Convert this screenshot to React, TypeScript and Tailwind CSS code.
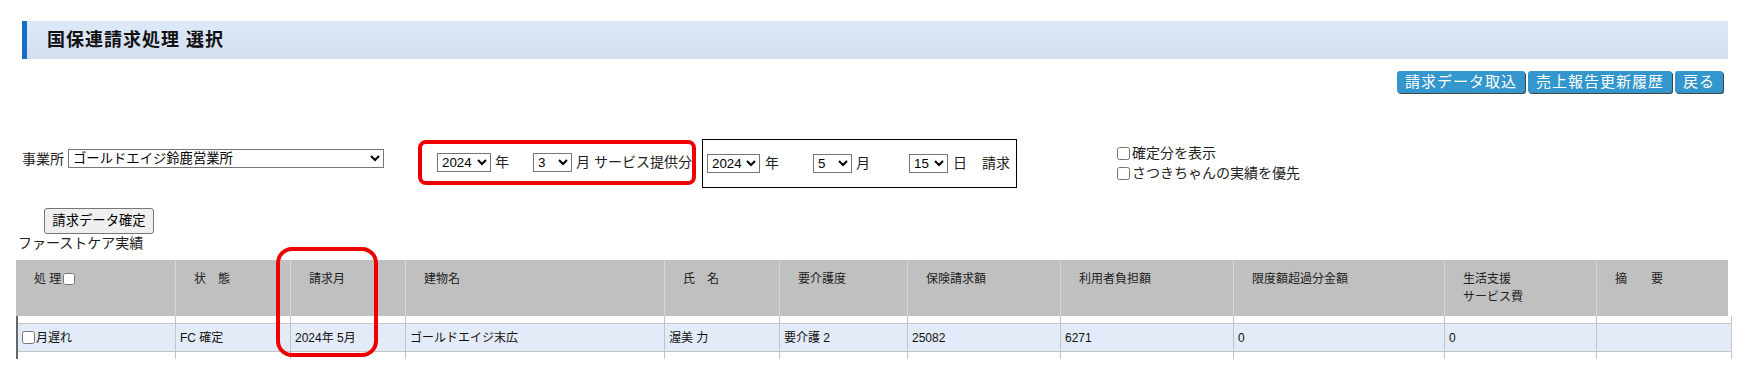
import React from "react";

const font = "font-['Liberation_Sans','Noto_Sans_CJK_JP',sans-serif]";

const headCols =
  "grid grid-cols-[160px_115px_115px_259px_115px_128px_153px_173px_211px_152px_131px]";
const dataCols =
  "grid grid-cols-[158px_115px_115px_259px_115px_128px_153px_173px_211px_152px_135px]";

const selectCls =
  "h-[19px] border border-[#767676] bg-white text-[13.33px] leading-none text-black";

const Sel = ({ value, w }: { value: string; w: string }) => (
  <select className={`${selectCls} ${w}`} defaultValue={value}>
    <option value={value}>{value}</option>
  </select>
);

const BlueButton = ({ label }: { label: string }) => (
  <button className="h-[22px] rounded-[3px] bg-[#3396cc] px-[8px] text-[15px] leading-[20px] tracking-[1px] text-white shadow-[1px_1px_0_#444]">
    {label}
  </button>
);

const headers: React.ReactNode[] = [
  <span className="flex items-center">
    処 理
    <input type="checkbox" className="ml-[2px] h-[12px] w-[12px]" />
  </span>,
  "状　態",
  "請求月",
  "建物名",
  "氏　名",
  "要介護度",
  "保険請求額",
  "利用者負担額",
  "限度額超過分金額",
  <span>
    生活支援
    <br />
    サービス費
  </span>,
  "摘　　要",
];

const row: React.ReactNode[] = [
  <span className="flex items-center">
    <input type="checkbox" className="mr-[1px] h-[13px] w-[13px]" />
    月遅れ
  </span>,
  "FC 確定",
  "2024年 5月",
  "ゴールドエイジ末広",
  "渥美 力",
  "要介護 2",
  "25082",
  "6271",
  "0",
  "0",
  "",
];

export default function App() {
  return (
    <div className={`${font} h-[377px] w-[1746px] overflow-hidden bg-white text-[14px] text-[#222]`}>
      {/* title bar */}
      <div className="pt-[21px] pl-[22px]">
        <div className="flex h-[38px] w-[1706px] items-center border-l-[5px] border-[#1a6dcc] bg-gradient-to-b from-[#dbeaf9] to-[#d4dfef] pl-[20px]">
          <h1 className="text-[18px] font-bold tracking-[1px] text-[#111]">国保連請求処理 選択</h1>
        </div>
      </div>

      {/* action buttons */}
      <div className="mt-[12px] flex justify-end gap-[3px] pr-[23px]">
        <BlueButton label="請求データ取込" />
        <BlueButton label="売上報告更新履歴" />
        <BlueButton label="戻る" />
      </div>

      {/* filters */}
      <div className="mt-[46px] flex items-start pl-[22px]">
        <div className="mt-[10px] flex items-center gap-[4px]">
          <span className="leading-[18px]">事業所</span>
          <select className={`${selectCls} h-[18px] w-[316px]`} defaultValue="a">
            <option value="a">ゴールドエイジ鈴鹿営業所</option>
          </select>
        </div>

        <div className="mt-[1px] ml-[34px] flex h-[45px] w-[278px] items-center rounded-[8px] border-4 border-[#ee0000] pl-[15px]">
          <Sel value="2024" w="w-[54px]" />
          <span className="ml-[4px]">年</span>
          <span className="ml-[24px]" />
          <Sel value="3" w="w-[39px]" />
          <span className="ml-[4px] whitespace-nowrap">月 サービス提供分</span>
        </div>

        <div className="ml-[6px] flex h-[49px] w-[315px] items-center border border-black pl-[4px]">
          <Sel value="2024" w="w-[53px]" />
          <span className="ml-[5px]">年</span>
          <span className="ml-[34px]" />
          <Sel value="5" w="w-[39px]" />
          <span className="ml-[4px]">月</span>
          <span className="ml-[39px]" />
          <Sel value="15" w="w-[39px]" />
          <span className="ml-[5px]">日</span>
          <span className="ml-[15px]">請求</span>
        </div>

        <div className="mt-[4px] ml-[100px] flex flex-col">
          <label className="flex h-[20px] items-center">
            <input type="checkbox" className="mr-[2px] h-[13px] w-[13px]" />
            確定分を表示
          </label>
          <label className="flex h-[20px] items-center">
            <input type="checkbox" className="mr-[2px] h-[13px] w-[13px]" />
            さつきちゃんの実績を優先
          </label>
        </div>
      </div>

      {/* confirm button */}
      <div className="mt-[20px] pl-[44px]">
        <button className="h-[26px] w-[110px] rounded-[3px] border border-[#767676] bg-[#efefef] text-[13.33px] text-black">
          請求データ確定
        </button>
      </div>
      <div className="pl-[18px] leading-[18px]">ファーストケア実績</div>

      {/* table */}
      <div className="relative mt-[8px] ml-[16px] text-[12px]">
        <div className={`${headCols} h-[56px] w-[1712px] bg-[#c0c0c0] text-[#222]`}>
          {headers.map((h, i) => (
            <div
              key={i}
              className={`pt-[10px] pl-[18px] leading-[18px] ${i < headers.length - 1 ? "border-r border-[#d6d6d6]" : ""}`}
            >
              {h}
            </div>
          ))}
        </div>

        <div className="w-[1716px] border-l-2 border-[#666]">
          <div className={`${dataCols} h-[7px]`}>
            {row.map((_, i) => (
              <div key={i} className="border-r border-[#c4c4c4]" />
            ))}
          </div>
          <div className={`${dataCols} h-[29px] border-y border-[#c4c4c4] bg-[#e3ebf8]`}>
            {row.map((c, i) => (
              <div key={i} className="flex items-center border-r border-[#c4c4c4] pl-[4px] text-[#111]">
                {c}
              </div>
            ))}
          </div>
          <div className={`${dataCols} h-[7px]`}>
            {row.map((_, i) => (
              <div key={i} className="border-r border-[#c4c4c4]" />
            ))}
          </div>
        </div>

        {/* highlight around 請求月 column */}
        <div className="pointer-events-none absolute top-[-13px] left-[260px] h-[110px] w-[102px] rounded-[16px] border-4 border-[#ee0000]" />
      </div>
    </div>
  );
}
